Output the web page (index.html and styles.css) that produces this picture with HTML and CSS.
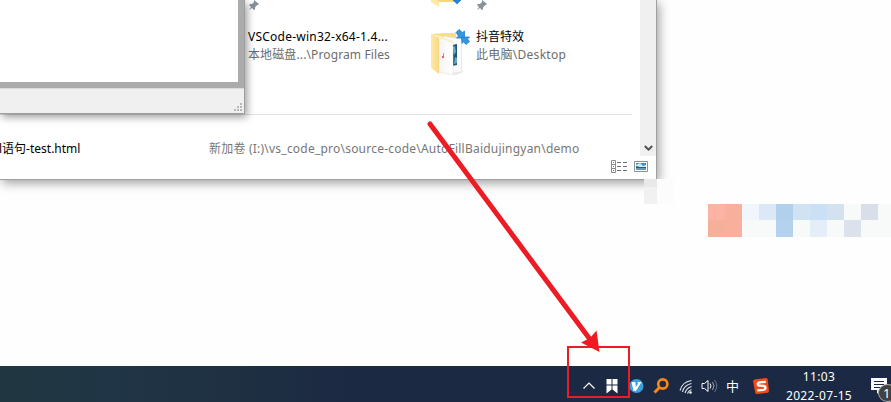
FILE: index.html
```html
<!DOCTYPE html>
<html lang="zh-CN">
<head>
<meta charset="utf-8">
<title>Desktop</title>
<link rel="stylesheet" href="styles.css">
</head>
<body>
<main class="desktop">
  <section class="explorer">
    <div class="view">
      <div class="content">
        <div class="tiles">
          <div class="tile">
            <div class="tile-icon"></div>
            <svg class="pin" width="12" height="12" viewBox="0 0 12 12"><path d="M6 1l5 4-1 1-1 .2-2 2.200v2L6 11 4 9 1 11l2-3-2-2 1-1h2l2-2z"/></svg>
          </div>
          <div class="tile">
            <svg class="tile-icon" width="46" height="10" viewBox="0 0 46 10"><path fill="#f7d67e" d="M1 0h25v2H9v4z"/><path fill="#ffe8a6" d="M1 0h6l2 1v6L1 2z"/><path fill="#2389dc" stroke="#1769b5" stroke-width=".6" d="M23 0h8l-4 4z"/></svg>
            <svg class="pin" width="12" height="12" viewBox="0 0 12 12"><path d="M6 1l5 4-1 1-1 .2-2 2.200v2L6 11 4 9 1 11l2-3-2-2 1-1h2l2-2z"/></svg>
          </div>
          <div class="tile">
            <div class="tile-icon"></div>
            <div class="tile-text"><div class="name vscode">VSCode-win32-x64-1.4...</div><div class="path files">本地磁盘...\Program Files</div></div>
          </div>
          <div class="tile">
            <svg class="tile-icon" width="46" height="50" viewBox="0 0 46 50">
              <defs>
                <linearGradient id="fold" x1="0" x2="1"><stop offset="0" stop-color="#ffe9a9"/><stop offset="1" stop-color="#f8d983"/></linearGradient>
                <linearGradient id="sheet" x1="0" x2="1"><stop offset="0" stop-color="#f4f4f4"/><stop offset="1" stop-color="#fff"/></linearGradient>
              </defs>
              <path fill="#e9e9e9" d="M20 46l15-3-9 4z"/>
              <path fill="#f7dc8b" d="M1 6l15-1h10v15H8z"/>
              <path fill="#fbfbfb" stroke="#dedede" stroke-width=".6" d="M13 8l18.500 3v33l-9.500 1z"/>
              <path fill="#1f5578" d="M22 17l5-1v21l-5 1z"/>
              <path fill="#6da9be" d="M23 19l2-1 1 6-2 3zM25 29l2 1v5l-3 1z"/>
              <path fill="url(#sheet)" stroke="#ddd" stroke-width=".5" d="M9 8l14 7v32L9 44z"/>
              <path fill="url(#fold)" d="M1 6l8 3v37l-8-6z"/>
              <path fill="#fff0ba" d="M1 6l9 2 13 5v1.500L9 10z"/>
              <path stroke="#7fa9e5" stroke-width="1" d="M13.500 25v3"/><circle cx="13" cy="29" r="1.200" fill="#dd6670"/>
              <g fill="#3497e3" stroke="#1c73be" stroke-width=".7"><path d="M26 4.500l3-3 3.500 3 2-1.500v7h-8l2-2z"/><path d="M39.500 13.500l-3.500 3-3-3-1 2-.5-6.500h8l-2 2z"/></g>
            </svg>
            <div class="tile-text"><div class="name">抖音特效</div><div class="path desk">此电脑\Desktop</div></div>
          </div>
        </div>
        <div class="recent"><span class="recent-name">l语句-test.html</span><span class="recent-path">新加卷 (I:)\vs_code_pro\source-code\AutoFillBaidujingyan\demo</span></div>
      </div>
      <div class="scrollbar"><svg width="9" height="7" viewBox="0 0 9 7"><path fill="none" stroke="#505050" stroke-width="2" d="M.8 1l3.700 3.700L8.200 1"/></svg></div>
    </div>
    <div class="statusbar">
      <svg width="17" height="13" viewBox="0 0 17 13"><path fill="#fff" stroke="#8b8b8b" d="M.5.5h4v12h-4zM.5 4.500h4M.5 8.500h4"/><path stroke="#707070" stroke-dasharray="4 2" d="M6 2.500h11M6 6.500h11M6 10.500h11"/><path fill="#4c80ad" d="M2 2h1v1H2zM2 6h1v1H2z"/><path fill="#b34141" d="M2 10h1v1H2z"/></svg>
      <svg width="14" height="11" viewBox="0 0 14 11"><path fill="#fff" stroke="#919191" d="M.5.5h13v10H.5z"/><path fill="#3d91d6" d="M2 2h10v4H2z"/><path fill="#d1eaf4" d="M2 4l4-2 3 3 3-1v2H2z"/><path fill="#315f55" d="M2 5l4 1 6 0v1H2z"/><path fill="#6899bd" d="M2 7h10v2H2z"/></svg>
    </div>
  </section>

  <section class="dialog">
    <div class="dialog-body"></div>
    <div class="dialog-status"><svg width="9" height="9" viewBox="0 0 9 9"><path fill="#b8b8b8" d="M6 0h2v2H6zM3 3h2v2H3zM6 3h2v2H6zM0 6h2v2H0zM3 6h2v2H3zM6 6h2v2H6z"/></svg></div>
  </section>

  <svg class="mosaic" width="30" height="25" viewBox="0 0 30 25" shape-rendering="crispEdges"><path fill="#e9e9e9" d="M0 0h13v8H0z"/><path fill="#f1f1f1" d="M0 8h13v17H0z"/><path fill="#fcfcfc" d="M13 0h17v25H13z"/></svg>
  <div class="censor">
    <i class="c1"></i><i class="c2"></i><i class="c3"></i><i class="c4"></i><i class="c5"></i><i class="c6"></i><i class="c7"></i><i class="c8"></i><i></i><i class="c9"></i><i></i>
    <i class="c10"></i><i class="c2"></i><i></i><i></i><i class="c11"></i><i></i><i class="c12"></i><i></i><i class="c13"></i><i></i><i></i>
  </div>

  <footer class="taskbar">
    <svg class="chevron" width="14" height="36" viewBox="0 0 14 36"><path fill="none" stroke="#fff" stroke-width="1.200" d="M1.500 22.500L7 17l5.500 5.500"/></svg>
    <svg class="bookmark" width="12" height="36" viewBox="0 0 12 36"><path fill="#fff" d="M.5 13h5v5.500h-5zM6.500 13h5v5.500h-5zM.5 19.500h5v4l-5 4zM6.500 19.500h5v8l-5-4z"/></svg>
    <svg class="vee" width="15" height="36" viewBox="0 0 15 36"><circle cx="7.500" cy="20" r="7" fill="#3ba0dc"/><path fill="#fff" d="M2.500 16h3.800l.5 5 2.400-3.500-1-1.500h4.300L7 25H4.500z"/></svg>
    <svg class="search" width="16" height="36" viewBox="0 0 16 36"><circle cx="9.800" cy="18" r="4.600" fill="none" stroke="#ff8712" stroke-width="2.600"/><path stroke="#ff8712" stroke-width="3" d="M6.500 21.500l-5 5"/></svg>
    <svg class="wifi" width="14" height="36" viewBox="0 0 14 36"><g fill="none" stroke="#e3e7ed" stroke-width="1.100"><path d="M1 24.500Q3 16 12.500 14.500M3.500 26Q5 19 12.500 17.500M6 27Q7.500 22 12.500 20.500M8.500 27.500Q9.500 24.500 12.500 23.500"/></g><circle cx="11.500" cy="26.500" r="1.300" fill="#fff"/></svg>
    <svg class="volume" width="17" height="36" viewBox="0 0 17 36"><path fill="none" stroke="#fff" d="M1 17.500h2.500l3.500-3v11l-3.500-3H1z"/><path fill="none" stroke="#fff" d="M9 17.500q2 2.500 0 5"/><path fill="none" stroke="#9da6b4" d="M11.500 16q3 4 0 8"/><path fill="none" stroke="#65738a" d="M13.500 14q4.500 6 0 12"/></svg>
    <span class="ime">中</span>
    <svg class="sogou" width="16" height="36" viewBox="0 0 16 36"><path fill="#f44b16" d="M1.500 13.500L13 12q1.500 0 1.700 1.500L16 25q0 1.500-1.500 1.700L4 28q-1.500 0-1.800-1.500L.2 15.500q0-1.500 1.300-2z"/><path fill="none" stroke="#fff" stroke-width="2.300" d="M12.800 15.800l-6 .5q-2.300.3-2 2 .2 1.400 2.200 1.400l3.500.2q2 .2 2 1.900 0 1.700-2.200 2l-6 .6"/></svg>
    <div class="clock"><span class="time">11:03</span><span class="date">2022-07-15</span></div>
    <div class="notice"><svg width="16" height="36" viewBox="0 0 16 36"><path fill="#fff" d="M0 12h16v12h-7l-3 4v-4H0z"/><path stroke="#1b2944" d="M3 15.500h10M3 18.500h10M3 21.500h7"/></svg><b>1</b></div>
  </footer>

  <svg class="annotation" width="891" height="402" viewBox="0 0 891 402"><path stroke="#ed1c24" stroke-width="5" stroke-linecap="round" d="M430 124l159 214"/><path fill="#ed1c24" d="M599.500 352L581 342.500l9-4.500 6.500-7.500z"/><path fill="none" stroke="#ed1c24" stroke-width="2" d="M568 347h61v50h-61z"/></svg>
</main>
</body>
</html>
```
FILE: styles.css
```css
* { box-sizing: border-box; }
body { margin: 0; overflow: hidden; background: #fff; font-family: "Noto Sans", "Noto Sans CJK SC", sans-serif; }
svg { display: block; flex: none; }
.desktop { position: relative; display: flex; flex-direction: column; justify-content: flex-end; width: 891px; height: 402px; overflow: hidden; background: #fefefe; }

.explorer { position: absolute; left: 0; top: 0; width: 657px; height: 180px; background: #fff; border: solid #a0a0a0; border-width: 0 1px 1px 0; box-shadow: 2px 3px 10px rgba(0,0,0,.38); font-size: 12px; }
.view { display: flex; height: 156px; }
.content { width: 640px; padding-right: 8px; }
.tiles { display: grid; grid-template: 28px 86px / 228px 228px; height: 115px; padding-left: 202px; border-bottom: 1px solid #e2e2e2; }
.tile { display: flex; min-width: 0; }
.tile-icon { flex: none; width: 46px; }
.pin { margin-top: -1px; fill: #87929c; }
.tile-text { white-space: nowrap; }
.name, .path { line-height: 18px; }
.name { color: #000; }
.path { color: #6d6d6d; }
.vscode { letter-spacing: .23px; }
.files { letter-spacing: .12px; }
.desk { letter-spacing: .27px; }
.recent { display: flex; padding-top: 25px; line-height: 18px; white-space: nowrap; }
.recent-name { width: 210px; margin-left: -1px; color: #000; }
.recent-path { color: #777; letter-spacing: .22px; }
.scrollbar { display: flex; align-items: flex-end; justify-content: center; width: 16px; padding-bottom: 4px; background: #f0f0f0; }
.statusbar { display: flex; gap: 6px; justify-content: flex-end; align-items: center; height: 21px; padding-right: 8px; }

.dialog { position: absolute; left: 0; top: 0; width: 245px; height: 114px; background: #f0f0f0; border: solid #9d9f9f; border-width: 0 1px 1px 0; box-shadow: 2px 3px 8px rgba(0,0,0,.4); }
.dialog-body { height: 88px; border: solid #ababab; border-width: 0 6px 6px 0; background: #fff; }
.dialog-status { display: flex; align-items: flex-end; justify-content: flex-end; height: 25px; padding: 0 1px 1px; border-top: 1px solid #dadada; }

.mosaic { position: absolute; left: 644px; top: 179px; }
.censor { position: absolute; left: 708px; top: 204px; display: grid; grid-template: 16px 17px / repeat(11, 17px); }
.censor i { background: #f7faf9; }
.censor .c1 { background: #fcb3a3; }
.censor .c2 { background: #f8b09d; }
.censor .c3 { background: #f0f6fb; }
.censor .c4 { background: #dce8f5; }
.censor .c5 { background: #b0d0ec; }
.censor .c6 { background: #d1e2f3; }
.censor .c7 { background: #cbe0f4; }
.censor .c8 { background: #d4e2f0; }
.censor .c9 { background: #d9dfe9; }
.censor .c10 { background: #f5b09a; }
.censor .c11 { background: #b4d1ed; }
.censor .c12 { background: #e5edf7; }
.censor .c13 { background: #dce2eb; }

.taskbar { display: flex; height: 36px; padding-left: 582px; color: #fff; background: linear-gradient(90deg, #203740 0, #203545 110px, #1e2f42 250px, #1b2943 360px, #1b2944 100%); }
.bookmark { margin-left: 10px; }
.vee { margin-left: 11px; }
.search { margin-left: 9px; }
.wifi { margin-left: 10px; }
.volume { margin-left: 8px; }
.ime { width: 14px; margin-left: 8px; font: 13px/39px "Noto Sans CJK SC", sans-serif; }
.sogou { margin-left: 13px; }
.clock { display: flex; flex-direction: column; align-items: center; width: 80px; margin-left: 10px; padding-top: 1px; font: 12px/19px "Noto Sans", sans-serif; letter-spacing: .35px; }
.notice { position: relative; margin-left: 12px; }
.notice b { position: absolute; left: 7px; top: 18px; width: 19px; height: 18px; border: 1px solid #aaa; border-radius: 50%; background: #414141; font: 13px/17px "Noto Sans", sans-serif; padding-left: 4px; }
.annotation { position: absolute; left: 0; top: 0; pointer-events: none; }
```
